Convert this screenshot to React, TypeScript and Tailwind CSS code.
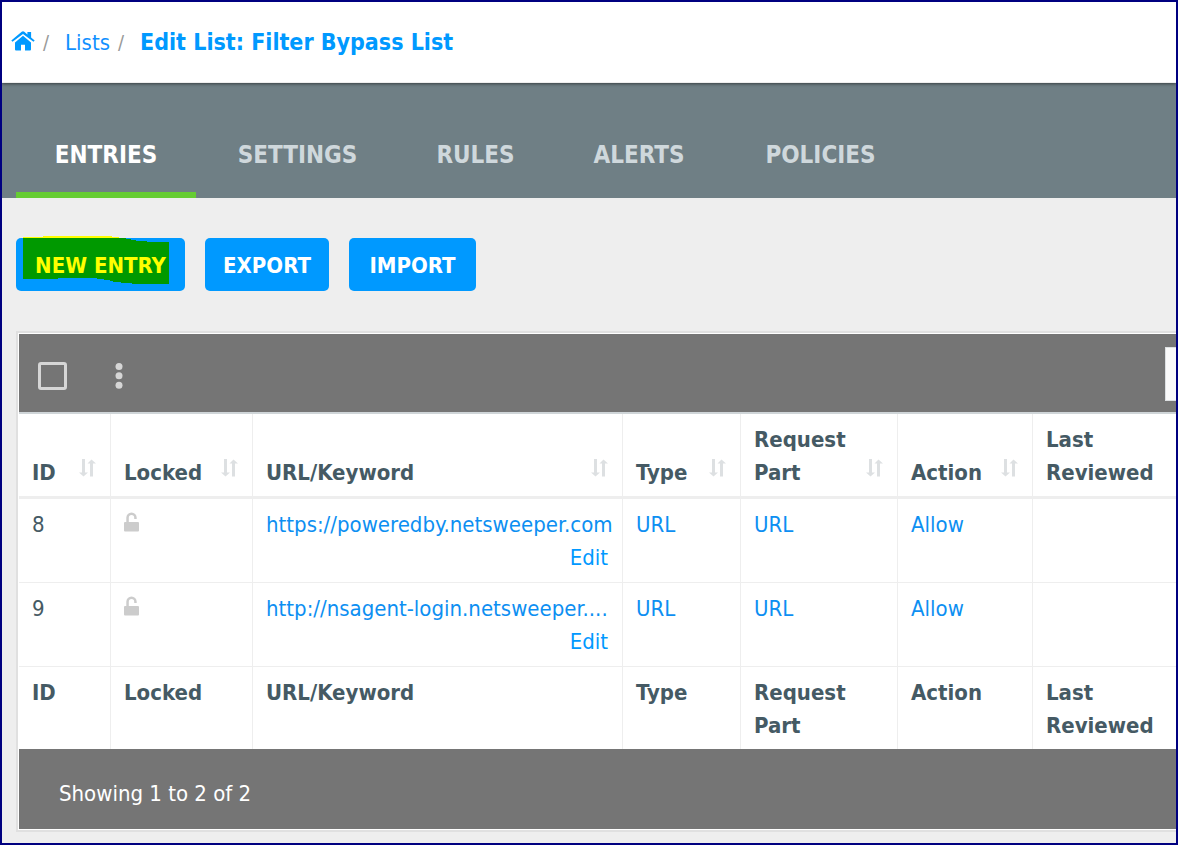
import React from "react";

type Column = { label: string; width: string; sortable: boolean };

const columns: Column[] = [
  { label: "ID", width: "w-[92px]", sortable: true },
  { label: "Locked", width: "w-[142px]", sortable: true },
  { label: "URL/Keyword", width: "w-[370px]", sortable: true },
  { label: "Type", width: "w-[118px]", sortable: true },
  { label: "Request Part", width: "w-[157px]", sortable: true },
  { label: "Action", width: "w-[135px]", sortable: true },
  { label: "Last Reviewed", width: "", sortable: false },
];

const tabs = [
  { label: "ENTRIES", width: "min-w-[180px]" },
  { label: "SETTINGS", width: "min-w-[195px]" },
  { label: "RULES", width: "min-w-[153px]" },
  { label: "ALERTS", width: "min-w-[166px]" },
  { label: "POLICIES", width: "min-w-[189px]" },
];

const entries = [
  { id: 8, url: "https://poweredby.netsweeper.com", type: "URL", part: "URL", action: "Allow" },
  { id: 9, url: "http://nsagent-login.netsweeper....", type: "URL", part: "URL", action: "Allow" },
];

function HomeIcon() {
  return (
    <svg width="24" height="20" viewBox="0 0 24 20" fill="#0099ff" aria-hidden="true">
      <path d="M12 4.8 4 11.400V18.500q0 1 1 1h5V13.800h4V19.500h5q1 0 1-1V11.400Z" />
      <path d="M12 .3q.7 0 1.300.5L16.400 3.400V1h3.700V6.400L23.700 9.400 22.500 10.800 12 2.900 1.500 10.800.3 9.400 10.700.8Q11.300.3 12 .3Z" />
    </svg>
  );
}

function SortIcon() {
  return (
    <svg width="17" height="18" viewBox="0 0 17 18" fill="#dde0e2" aria-hidden="true">
      <path d="M3 0h3v13.500h3L4.500 17.500 0 13.500h3Z" />
      <path d="M11 17.500h3V4.500h3L12.500 .5 8.500 4.500H11Z" />
    </svg>
  );
}

function UnlockIcon() {
  return (
    <svg width="15" height="20" viewBox="0 0 15 20" fill="#cccccc" aria-hidden="true">
      <rect x="0" y="10" width="15" height="9.500" rx="1" />
      <path d="M2.300 11V5.700a5.200 5.200 0 0 1 10.400 0V7h-2.500V5.700a2.700 2.700 0 0 0-5.400 0V11Z" />
    </svg>
  );
}

function Toolbar() {
  return (
    <div className="flex h-20 items-start justify-between border-b-2 border-[#cfd5d8] bg-[#757575] pl-[19px] pt-[13px]">
      <div className="flex h-[58px] items-center">
        <input
          type="checkbox"
          aria-label="Select all entries"
          className="h-7 w-[29px] appearance-none rounded-[3px] border-3 border-[#d6d6d6]"
        />
        <button type="button" aria-label="More actions" className="ml-12 flex h-7 w-2 items-center">
          <svg width="8" height="26" viewBox="0 0 8 26" fill="#d6d6d6" aria-hidden="true">
            <circle cx="4" cy="3.500" r="3.500" />
            <circle cx="4" cy="12.700" r="3.500" />
            <circle cx="4" cy="22.300" r="3.500" />
          </svg>
        </button>
      </div>
      <input
        type="text"
        aria-label="Search entries"
        className="h-[54px] w-[11px] border border-r-0 border-[#dde0e2] bg-[#fafafa]"
      />
    </div>
  );
}

export default function App() {
  const cell = "border-r border-[#eeeeee] pl-[13px] pr-[14px] last:border-r-0";
  const link = "text-[#0d8ff2]";
  return (
    <div className="overflow-hidden border-2 border-[#000080] bg-[#eeeeee] pb-[11px] font-['DejaVu_Sans_Condensed','Noto_Sans',sans-serif] text-[22px] leading-[33px] text-[#455a64]">
      <header className="relative border-b border-[#eeeeee] bg-white shadow-[0_1px_3px_rgba(0,0,0,0.5)]">
        <nav aria-label="Breadcrumb" className="flex h-20 items-center pl-[9px]">
          <a href="#home" aria-label="Home" className="pb-[3px]">
            <HomeIcon />
          </a>
          <span className="ml-2 text-[20px] text-[#999999]">/</span>
          <a href="#lists" className="ml-4 text-[#1090ff]">Lists</a>
          <span className="ml-2 text-[20px] text-[#999999]">/</span>
          <a href="#edit" className="ml-4 text-[23px] font-bold text-[#0099ff]">Edit List: Filter Bypass List</a>
        </nav>
      </header>

      <nav aria-label="List sections" className="flex h-[115px] items-end gap-1 bg-[#6f7f85] pl-[14px]">
        {tabs.map((tab, i) => (
          <a
            key={tab.label}
            href={`#${tab.label.toLowerCase()}`}
            className={`${tab.width} border-b-6 pb-5 text-center text-2xl/[33px] font-bold ${
              i === 0 ? "border-[#66cc33] text-white" : "border-transparent text-[#cfd8dc]"
            }`}
          >
            {tab.label}
          </a>
        ))}
      </nav>

      <main className="pl-[14px] pt-10">
        <div className="flex gap-[20px] font-bold text-white">
          <button type="button" className="relative h-[53px] w-[169px] rounded-[5px] bg-[#0099ff] pt-0.5 text-[#ffff00]">
            <svg className="absolute -top-0.5 left-[7px]" width="146" height="49" viewBox="0 0 146 49" aria-hidden="true">
              <path fill="#ffff00" d="M0 1H20V0H89V1H96V2H0Z" />
              <path fill="#009900" d="M0 2H103V3H108V4H113V5H124V6H146V48H109V47H98V46H90V45H87V44H81V43H74V42H35V43H0Z" />
            </svg>
            <span className="relative">NEW ENTRY</span>
          </button>
          <button type="button" className="h-[53px] w-[124px] rounded-[5px] bg-[#0099ff] pt-0.5">EXPORT</button>
          <button type="button" className="h-[53px] w-[127px] rounded-[5px] bg-[#0099ff] pt-0.5">IMPORT</button>
        </div>

        <section className="mt-10 border-y-2 border-l-2 border-[#e0e0e0] bg-white py-px pl-px">
          <Toolbar />
          <table className="w-full table-fixed border-separate border-spacing-0 text-left">
            <thead>
              <tr>
                {columns.map((column) => (
                  <th
                    key={column.label}
                    className={`${cell} ${column.width} border-b-3 border-b-[#eeeeee] pb-[7px] pt-[9px] align-bottom`}
                  >
                    <div className="flex items-end justify-between">
                      <span className="min-w-0">{column.label}</span>
                      {column.sortable && (
                        <button type="button" aria-label={`Sort by ${column.label}`} className="shrink-0 pb-3">
                          <SortIcon />
                        </button>
                      )}
                    </div>
                  </th>
                ))}
              </tr>
            </thead>
            <tbody>
              {entries.map((entry) => (
                <tr key={entry.id} className="align-top">
                  <td className={`${cell} border-b pb-2 pt-[9px]`}>{entry.id}</td>
                  <td className={`${cell} border-b pb-2 pt-[9px]`}>
                    <div className="pt-1">
                      <UnlockIcon />
                    </div>
                  </td>
                  <td className={`${cell} border-b pb-2 pt-[9px]`}>
                    <a href="#entry" className={`${link} block whitespace-nowrap`}>{entry.url}</a>
                    <a href="#edit-entry" className="block text-right text-[#0099ff]">Edit</a>
                  </td>
                  <td className={`${cell} border-b pb-2 pt-[9px]`}>
                    <a href="#type" className={link}>{entry.type}</a>
                  </td>
                  <td className={`${cell} border-b pb-2 pt-[9px]`}>
                    <a href="#part" className={link}>{entry.part}</a>
                  </td>
                  <td className={`${cell} border-b pb-2 pt-[9px]`}>
                    <a href="#action" className={link}>{entry.action}</a>
                  </td>
                  <td className={`${cell} border-b pb-2 pt-[9px]`} />
                </tr>
              ))}
            </tbody>
            <tfoot>
              <tr className="align-top">
                {columns.map((column) => (
                  <th key={column.label} className={`${cell} pb-[7px] pt-[9px]`}>
                    {column.label}
                  </th>
                ))}
              </tr>
            </tfoot>
          </table>
          <div className="flex h-20 items-center bg-[#757575] pl-10 pt-2 text-white">
            Showing 1 to 2 of 2
          </div>
        </section>
      </main>
    </div>
  );
}
